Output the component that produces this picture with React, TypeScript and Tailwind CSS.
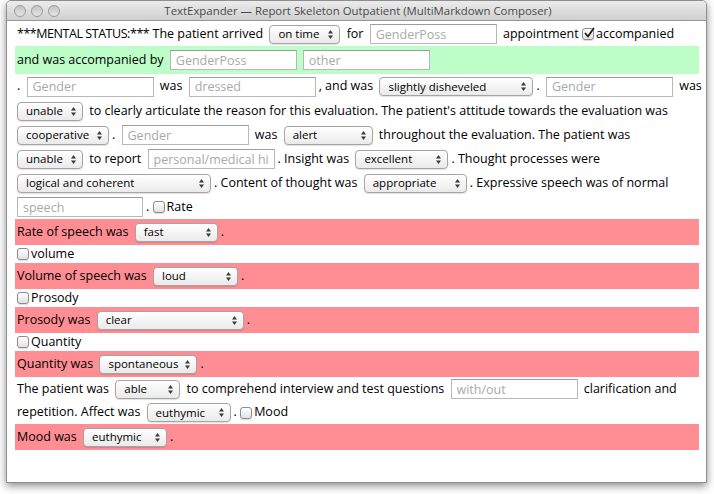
import type { ReactNode } from 'react'

const font = { fontFamily: '"Open Sans", "DejaVu Sans", sans-serif' }

function Arrows() {
  return (
    <svg width="5" height="9" viewBox="0 0 5 9" className="ml-1 shrink-0">
      <path d="M0 3.5 L2.5 0 L5 3.5Z" fill="#3a3a3a" />
      <path d="M0 5.5 L2.5 9 L5 5.5Z" fill="#3a3a3a" />
    </svg>
  )
}

function Select({ label, className }: { label: string; className: string }) {
  return (
    <span
      className={`mx-[3px] inline-flex h-[19px] shrink-0 items-center justify-between rounded-[4px] border border-[#a5a5a5] bg-gradient-to-b from-white to-[#eaeaea] pl-[8px] pr-[6px] text-[11.5px] leading-none text-black shadow-[0_1px_1px_rgba(0,0,0,0.12)] ${className}`}
    >
      <span>{label}</span>
      <Arrows />
    </span>
  )
}

function Field({ placeholder, className = 'w-[127px]' }: { placeholder: string; className?: string }) {
  return (
    <input
      readOnly
      placeholder={placeholder}
      className={`mx-[3px] h-[20px] shrink-0 border border-[#b8b8b8] border-t-[#9c9c9c] bg-white px-[5px] text-[12.5px] outline-none placeholder:text-[#a9a9a9] ${className}`}
      style={font}
    />
  )
}

function Check({ checked = false }: { checked?: boolean }) {
  return (
    <span className="relative mr-[2px] inline-block h-[12px] w-[12px] shrink-0 rounded-[3px] border border-[#8c8c8c] bg-gradient-to-b from-white to-[#e2e2e2] shadow-[0_1px_1px_rgba(0,0,0,0.15)]">
      {checked && (
        <svg width="12" height="12" viewBox="0 0 12 12" className="absolute -top-[2px] left-0">
          <path d="M2.5 6.5 L5 9.5 L10.5 1.5" fill="none" stroke="#1d1d1d" strokeWidth="1.8" strokeLinecap="round" strokeLinejoin="round" />
        </svg>
      )}
    </span>
  )
}

function Row({ children, h = 'h-[24px]' }: { children: ReactNode; h?: string }) {
  return <div className={`flex items-center whitespace-pre pl-[2px] ${h}`}>{children}</div>
}

function Bar({ children, color = 'bg-[#ff8e94]', h = 'h-[26px]' }: { children: ReactNode; color?: string; h?: string }) {
  return <div className={`flex items-center whitespace-pre pl-[2px] ${color} ${h}`}>{children}</div>
}

export default function App() {
  return (
    <div className="h-[494px] w-[714px] overflow-hidden bg-white pl-[6px] text-[12.5px] text-black" style={font}>
      <div className="flex h-[483px] w-[701px] flex-col overflow-hidden rounded-t-[5px] border border-[#8e8e8e] bg-white shadow-[0_3px_9px_rgba(0,0,0,0.45)]">
        {/* Title bar */}
        <div className="relative flex h-[20px] shrink-0 items-center border-b border-[#979797] bg-gradient-to-b from-[#ececec] to-[#cfcfcf]">
          <div className="flex items-center gap-[5px] pl-[7px]">
            <span className="h-[12px] w-[12px] rounded-full border border-[#9b9b9b] bg-gradient-to-b from-[#c4c4c4] to-[#e4e4e4]" />
            <span className="h-[12px] w-[12px] rounded-full border border-[#9b9b9b] bg-gradient-to-b from-[#c4c4c4] to-[#e4e4e4]" />
            <span className="h-[12px] w-[12px] rounded-full border border-[#9b9b9b] bg-gradient-to-b from-[#c4c4c4] to-[#e4e4e4]" />
          </div>
          <div className="flex-1 pr-[50px] text-center text-[11.4px] text-[#4a4a4a]">
            TextExpander — Report Skeleton Outpatient (MultiMarkdown Composer)
          </div>
        </div>

        {/* Document */}
        <div className="flex-1 pl-[8px] pr-[7px] pt-[1px]">
          <Row>
            <span className="tracking-[-0.45px]">***MENTAL STATUS:***</span> The patient arrived <Select label="on time" className="w-[71px]" /> for <Field placeholder="GenderPoss" /> appointment <Check checked />accompanied
          </Row>
          <Bar color="bg-[#bcfdc8]" h="h-[28px]">
            and was accompanied by <Field placeholder="GenderPoss" /> <Field placeholder="other" />
          </Bar>
          <Row h="h-[25px]">
            . <Field placeholder="Gender" /> was <Field placeholder="dressed" />, and was <Select label="slightly disheveled" className="w-[154px]" />. <Field placeholder="Gender" /> was
          </Row>
          <Row>
            <Select label="unable" className="w-[66px] ml-0" /> to clearly articulate the reason for this evaluation. The patient's attitude towards the evaluation was
          </Row>
          <Row>
            <Select label="cooperative" className="w-[92px] ml-0" />. <Field placeholder="Gender" /> was <Select label="alert" className="w-[89px]" /> throughout the evaluation. The patient was
          </Row>
          <Row>
            <Select label="unable" className="w-[66px] ml-0" /> to report <Field placeholder="personal/medical history" />. Insight was <Select label="excellent" className="w-[93px]" />. Thought processes were
          </Row>
          <Row>
            <Select label="logical and coherent" className="w-[194px] ml-0" />. Content of thought was <Select label="appropriate" className="w-[103px]" />. Expressive speech was of normal
          </Row>
          <Row>
            <Field placeholder="speech" className="w-[126px] ml-0" />. <Check />Rate
          </Row>
          <Bar>
            Rate of speech was <Select label="fast" className="w-[83px]" />.
          </Bar>
          <Row h="h-[18px]">
            <Check />volume
          </Row>
          <Bar>
            Volume of speech was <Select label="loud" className="w-[85px]" />.
          </Bar>
          <Row h="h-[18px]">
            <Check />Prosody
          </Row>
          <Bar>
            Prosody was <Select label="clear" className="w-[147px]" />.
          </Bar>
          <Row h="h-[18px]">
            <Check />Quantity
          </Row>
          <Bar>
            Quantity was <Select label="spontaneous" className="w-[98px]" />.
          </Bar>
          <Row>
            The patient was <Select label="able" className="w-[65px]" /> to comprehend interview and test questions <Field placeholder="with/out" /> clarification and
          </Row>
          <Row h="h-[23px]">
            repetition. Affect was <Select label="euthymic" className="w-[84px]" />. <Check />Mood
          </Row>
          <Bar>
            Mood was <Select label="euthymic" className="w-[84px]" />.
          </Bar>
        </div>
      </div>
    </div>
  )
}
